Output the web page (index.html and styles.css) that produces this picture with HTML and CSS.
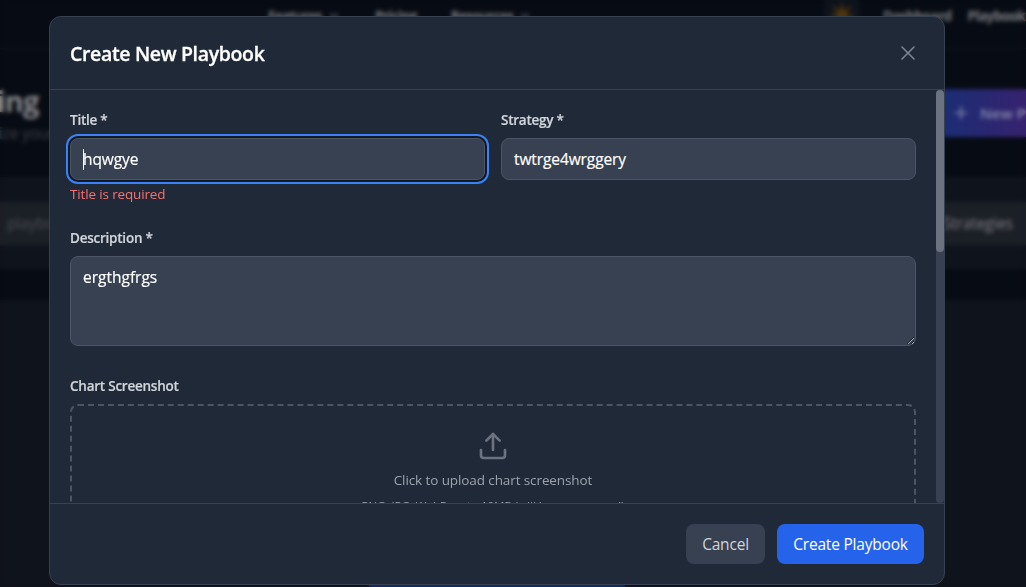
FILE: index.html
```html
<!DOCTYPE html>
<html lang="en">
<head>
<meta charset="utf-8">
<title>Create New Playbook</title>
<link rel="stylesheet" href="styles.css">
</head>
<body>
<div class="page" aria-hidden="true">
  <nav class="nav">
    <div class="nav-links">
      <span class="nav-item">Features <svg class="chev" viewBox="0 0 24 24"><path d="m6 9 6 6 6-6"/></svg></span>
      <span class="nav-item">Pricing</span>
      <span class="nav-item">Resources <svg class="chev" viewBox="0 0 24 24"><path d="m6 9 6 6 6-6"/></svg></span>
    </div>
    <div class="nav-right">
      <span class="theme"><svg viewBox="0 0 24 24"><circle cx="12" cy="12" r="5"/><path d="M12 1v22M1 12h22M4 4l16 16M20 4 4 20"/></svg></span>
      <span class="nav-item">Dashboard</span>
      <span class="nav-item">Playbook</span>
    </div>
  </nav>
  <header class="hero">
    <div class="hero-text">
      <h1>ing</h1>
      <p>ize your</p>
    </div>
    <div class="new-btn"><svg viewBox="0 0 24 24"><path d="M12 5v14M5 12h14"/></svg><span>New Playbook</span></div>
  </header>
  <section class="filters">
    <div class="search">playbooks</div>
    <div class="select">Strategies</div>
  </section>
  <section class="content"><div class="content-btn"></div></section>
</div>

<div class="overlay">
  <div class="modal" role="dialog" aria-labelledby="modal-title">
    <header class="modal-header">
      <h2 id="modal-title">Create New Playbook</h2>
      <svg class="close" viewBox="0 0 24 24"><path d="M18 6 6 18M6 6l12 12"/></svg>
    </header>
    <div class="modal-main">
      <form class="form">
        <div class="row">
          <div class="field">
            <div class="label">Title *</div>
            <div class="input focused"><span class="caret"></span>hqwgye</div>
            <p class="error">Title is required</p>
          </div>
          <div class="field">
            <div class="label">Strategy *</div>
            <div class="input">twtrge4wrggery</div>
          </div>
        </div>
        <div class="field">
          <div class="label">Description *</div>
          <textarea class="textarea">ergthgfrgs</textarea>
        </div>
        <div class="field">
          <div class="label">Chart Screenshot</div>
          <div class="drop">
            <svg class="upload" viewBox="0 0 24 24"><path d="M21 15v4a2 2 0 0 1-2 2H5a2 2 0 0 1-2-2v-4"/><path d="m17 8-5-5-5 5"/><path d="M12 3v12"/></svg>
            <p class="drop-text">Click to upload chart screenshot</p>
            <p class="drop-hint">PNG, JPG, WebP up to 10MB (will be compressed)</p>
          </div>
        </div>
      </form>
      <div class="scrollbar"><div class="thumb"></div></div>
    </div>
    <footer class="modal-footer">
      <button class="btn cancel">Cancel</button>
      <button class="btn create">Create Playbook</button>
    </footer>
  </div>
</div>
</body>
</html>
```
FILE: styles.css
```css
* { box-sizing: border-box; margin: 0; padding: 0; }
html, body { height: 100%; overflow: hidden; }
body {
  background: #070b13;
  font-family: "Open Sans", "Noto Sans", sans-serif;
  color: #fff;
}
svg { fill: none; stroke: currentColor; stroke-width: 2; stroke-linecap: round; stroke-linejoin: round; flex: none; }

/* Page behind the dialog */
.page { width: 1026px; height: 587px; overflow: hidden; display: flex; flex-direction: column; color: #77797e; }
.nav { height: 49px; flex: none; border-bottom: 1px solid #12171f; display: flex; justify-content: space-between; align-items: flex-start; padding-left: 268px; }
.nav-links { display: flex; gap: 34px; padding-top: 6px; }
.nav-item { font-size: 13.5px; font-weight: 700; line-height: 20px; letter-spacing: -0.65px; display: flex; align-items: center; gap: 5px; white-space: nowrap; }
.chev { width: 14px; height: 14px; }
.nav-right { display: flex; align-items: flex-start; gap: 16px; width: 202px; padding-top: 6px; }
.nav-right .nav-item { letter-spacing: -0.55px; }
.theme { width: 36px; height: 36px; margin: -9px 7px 0 0; background: #0e131b; border-radius: 8px; padding: 6px; color: #4f350e; flex: none; }
.theme svg { width: 24px; height: 24px; display: block; }
.theme circle { fill: currentColor; }
.hero { height: 128px; flex: none; display: flex; justify-content: space-between; padding-top: 34px; }
.hero-text { display: flex; flex-direction: column; }
.hero h1 { font-size: 29px; line-height: 36px; font-weight: 700; color: #85868a; letter-spacing: -1px; margin-left: -3px; }
.hero p { font-size: 15.5px; line-height: 24px; margin-top: 2px; color: #3c3f46; letter-spacing: -0.2px; margin-left: -1px; }
.new-btn { width: 96px; height: 48px; margin-top: 6px; padding-left: 21px; display: flex; align-items: center; gap: 9px; background: linear-gradient(90deg, #172f75, #36226f); color: #8789aa; font-size: 15px; font-weight: 600; white-space: nowrap; }
.new-btn svg { width: 20px; height: 20px; }
.filters { height: 92px; flex: none; background: #0f131b; display: flex; justify-content: space-between; align-items: center; }
.search, .select { height: 43px; line-height: 43px; background: #1b1f26; font-size: 15.5px; letter-spacing: -0.2px; }
.search { width: 300px; padding-left: 7px; color: #4a4d54; }
.select { width: 112px; padding-left: 29px; color: #7b7d82; }
.content { margin-top: 31px; height: 300px; flex: none; background: #0f131b; display: flex; justify-content: center; padding-top: 284px; }
.content-btn { width: 256px; height: 48px; margin-right: 32px; background: #142f75; }

/* Dialog */
.overlay { position: fixed; inset: 0; display: flex; align-items: flex-start; padding: 16px 0 0 49px; backdrop-filter: blur(2px); }
.modal { width: 896px; height: 569px; background: #1f2937; border: 1px solid #374151; border-radius: 12px; display: flex; flex-direction: column; overflow: hidden; flex: none; }
.modal-header { height: 73px; flex: none; border-bottom: 1px solid #374151; display: flex; align-items: center; justify-content: space-between; padding: 0 24px 0 20px; }
.modal-header h2 { font-size: 19.5px; line-height: 28px; font-weight: 600; letter-spacing: -0.35px; padding-top: 2px; -webkit-text-stroke: 0.3px currentColor; }
.close { width: 24px; height: 24px; color: #7c8493; stroke-width: 1.6; }
.modal-main { flex: 1; min-height: 0; display: flex; overflow: hidden; }
.form { flex: 1; padding: 20px 20px 0; display: flex; flex-direction: column; gap: 24px; }
.row { display: grid; grid-template-columns: 1fr 1fr; gap: 16px; }
.label { font-size: 13.5px; line-height: 20px; font-weight: 600; letter-spacing: -0.24px; color: #d1d5db; margin-bottom: 8px; -webkit-text-stroke: 0.2px currentColor; }
.input { position: relative; height: 42px; line-height: 41px; padding: 0 12px; background: #374151; border: 1px solid #4b5563; border-radius: 8px; font-size: 15.5px; letter-spacing: -0.1px; -webkit-text-stroke: 0.2px currentColor; }
.focused { box-shadow: 0 0 0 2px #111827, 0 0 0 4px #3b82f6; }
.caret { position: absolute; left: 12px; top: 10px; width: 1px; height: 21px; background: #fff; }
.error { font-size: 13.5px; line-height: 20px; margin-top: 4px; letter-spacing: -0.15px; color: #f87171; }
.textarea { display: block; width: 100%; height: 90px; margin-bottom: 6px; padding: 8px 12px; background: #374151; border: 1px solid #4b5563; border-radius: 8px; color: #fff; font: inherit; font-size: 15.5px; line-height: 25px; letter-spacing: 0; outline: none; resize: vertical; -webkit-text-stroke: 0.2px currentColor; }
.drop { height: 142px; border: 2px dashed #4b5563; border-radius: 8px; padding: 24px; display: flex; flex-direction: column; align-items: center; }
.upload { width: 32px; height: 32px; color: #6b7280; margin-bottom: 8px; }
.drop-text { font-size: 13.5px; line-height: 20px; letter-spacing: -0.1px; color: #9ca3af; white-space: nowrap; }
.drop-hint { font-size: 11.5px; line-height: 16px; margin-top: 8px; color: #9ca3af; white-space: nowrap; }
.scrollbar { width: 8px; background: #374151; border-radius: 4px; flex: none; }
.thumb { height: 162px; background: #6b7280; border-radius: 4px; }
.modal-footer { height: 81px; flex: none; border-top: 1px solid #374151; display: flex; justify-content: flex-end; align-items: center; gap: 12px; padding-right: 20px; }
.btn { height: 40px; border: 0; border-radius: 8px; font-family: inherit; font-size: 15.5px; letter-spacing: -0.2px; }
.cancel { width: 79px; background: #374151; color: #d1d5db; }
.create { width: 147px; background: #2563eb; color: #fff; }
```
